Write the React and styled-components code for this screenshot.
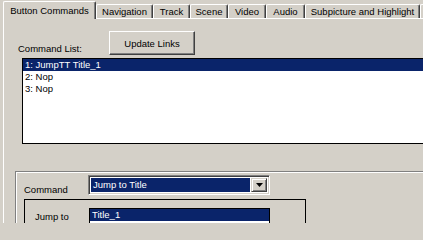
import React from 'react';
import styled, { createGlobalStyle } from 'styled-components';

const GlobalStyle = createGlobalStyle`
  html, body {
    margin: 0;
    padding: 0;
    width: 423px;
    height: 223px;
    overflow: hidden;
    background: #d4d0c8;
  }
  body {
    font-family: "Liberation Sans", Arial, sans-serif;
    font-size: 9.5px;
    color: #000;
  }
`;

const Window = styled.div`
  width: 423px;
  height: 223px;
  overflow: hidden;
  background: #d4d0c8;
`;

const TabStrip = styled.div`
  display: flex;
  align-items: flex-end;
  height: 18px;
  padding-left: 3px;
  position: relative;
  z-index: 1;
`;

const Tab = styled.div`
  box-sizing: border-box;
  width: ${(p) => p.width}px;
  height: ${(p) => (p.active ? 18 : 14)}px;
  margin-bottom: ${(p) => (p.active ? -1 : 0)}px;
  flex-shrink: 0;
  display: flex;
  align-items: ${(p) => (p.active ? 'flex-start' : 'center')};
  justify-content: center;
  padding-top: ${(p) => (p.active ? 3 : 0)}px;
  background: #d4d0c8;
  border-top: 1px solid #fff;
  border-left: 1px solid #fff;
  border-right: 1px solid #404040;
  border-top-left-radius: 2px;
  border-top-right-radius: 2px;
  box-shadow: inset -1px 0 0 #808080;
  line-height: 11px;
  white-space: nowrap;
`;

const Panel = styled.div`
  width: 520px;
  height: 204px;
  margin-left: 3px;
  border-top: 1px solid #fff;
  border-left: 1px solid #fff;
  overflow: hidden;
`;

const TopRow = styled.div`
  display: flex;
  align-items: flex-end;
  padding-left: 14px;
  margin-top: 12px;
`;

const Label = styled.div`
  width: ${(p) => p.width}px;
  flex-shrink: 0;
  line-height: 12px;
  padding-bottom: ${(p) => p.bottom || 0}px;
  padding-top: ${(p) => p.top || 0}px;
  white-space: nowrap;
`;

const Button = styled.div`
  box-sizing: border-box;
  width: 86px;
  height: 24px;
  display: flex;
  align-items: center;
  justify-content: center;
  background: #d4d0c8;
  border-top: 1px solid #fff;
  border-left: 1px solid #fff;
  border-right: 1px solid #404040;
  border-bottom: 1px solid #404040;
  box-shadow: inset -1px -1px 0 #808080;
`;

const ListBox = styled.div`
  box-sizing: border-box;
  width: ${(p) => p.width}px;
  height: ${(p) => p.height}px;
  margin-left: ${(p) => p.left || 0}px;
  margin-top: ${(p) => p.gap || 0}px;
  border: 1px solid #000;
  background: #fff;
  flex-shrink: 0;
`;

const Item = styled.div`
  height: 12px;
  line-height: 12px;
  padding-left: 2px;
  white-space: nowrap;
  background: ${(p) => (p.selected ? '#0a246a' : 'transparent')};
  color: ${(p) => (p.selected ? '#fff' : '#000')};
`;

const GroupBox = styled.div`
  width: 500px;
  height: 80px;
  margin-left: 11px;
  margin-top: 27px;
  border-top: 1px solid #808080;
  border-left: 1px solid #808080;
  box-shadow: inset 1px 1px 0 #fff;
`;

const FieldRow = styled.div`
  display: flex;
  align-items: flex-start;
  padding-left: ${(p) => p.left}px;
  margin-top: ${(p) => p.gap}px;
`;

const Combo = styled.div`
  box-sizing: border-box;
  width: 182px;
  height: 20px;
  display: flex;
  padding: 2px;
  gap: 1px;
  background: #fff;
  border-top: 1px solid #808080;
  border-left: 1px solid #808080;
  border-right: 1px solid #fff;
  border-bottom: 1px solid #fff;
  box-shadow: inset 1px 1px 0 #404040, inset -1px -1px 0 #d4d0c8;
`;

const ComboValue = styled.div`
  flex: 1;
  background: #0a246a;
  color: #fff;
  line-height: 14px;
  padding-left: 2px;
  white-space: nowrap;
`;

const DropButton = styled.div`
  box-sizing: border-box;
  width: 16px;
  display: flex;
  align-items: center;
  justify-content: center;
  background: #d4d0c8;
  border-top: 1px solid #d4d0c8;
  border-left: 1px solid #d4d0c8;
  border-right: 1px solid #404040;
  border-bottom: 1px solid #404040;
  box-shadow: inset 1px 1px 0 #fff, inset -1px -1px 0 #808080;
`;

const Frame = styled.div`
  width: 280px;
  height: 40px;
  margin-left: 8px;
  margin-top: 3px;
  border: 1px solid #000;
`;

const Arrow = () => (
  <svg width="7" height="4" viewBox="0 0 7 4">
    <path d="M0 0h7L3.5 4z" fill="#000" />
  </svg>
);

const tabs = [
  { name: 'Button Commands', width: 93 },
  { name: 'Navigation', width: 57 },
  { name: 'Track', width: 37 },
  { name: 'Scene', width: 38 },
  { name: 'Video', width: 38 },
  { name: 'Audio', width: 39 },
  { name: 'Subpicture and Highlight', width: 115 },
  { name: '', width: 40 },
];

const commands = ['1: JumpTT Title_1', '2: Nop', '3: Nop'];

const App = () => (
  <>
    <GlobalStyle />
    <Window>
      <TabStrip>
        {tabs.map((t, i) => (
          <Tab key={i} width={t.width} active={i === 0}>{t.name}</Tab>
        ))}
      </TabStrip>
      <Panel>
        <TopRow>
          <Label width={91}>Command List:</Label>
          <Button>Update Links</Button>
        </TopRow>
        <ListBox width={480} height={86} left={18} gap={3}>
          {commands.map((c, i) => (
            <Item key={c} selected={i === 0}>{c}</Item>
          ))}
        </ListBox>
        <GroupBox>
          <FieldRow left={8} gap={3}>
            <Label width={64} top={9}>Command</Label>
            <Combo>
              <ComboValue>Jump to Title</ComboValue>
              <DropButton><Arrow /></DropButton>
            </Combo>
          </FieldRow>
          <Frame>
            <FieldRow left={10} gap={8}>
              <Label width={54} top={3}>Jump to</Label>
              <ListBox width={181} height={40}>
                <Item selected>Title_1</Item>
              </ListBox>
            </FieldRow>
          </Frame>
        </GroupBox>
      </Panel>
    </Window>
  </>
);

export default App;
